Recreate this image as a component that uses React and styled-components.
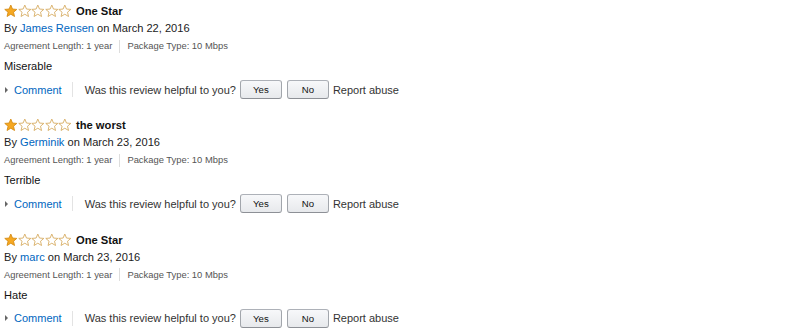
import React from 'react';
import styled, { createGlobalStyle } from 'styled-components';

const GlobalStyle = createGlobalStyle`
  body {
    margin: 0;
    background: #fff;
    font-family: "Liberation Sans", Arial, sans-serif;
    color: #111;
  }
`;

const reviews = [
  { title: 'One Star', author: 'James Rensen', date: 'March 22, 2016', body: 'Miserable' },
  { title: 'the worst', author: 'Germinik', date: 'March 23, 2016', body: 'Terrible' },
  { title: 'One Star', author: 'marc', date: 'March 23, 2016', body: 'Hate' },
];

const List = styled.div`
  padding: 3px 0 0 4px;
`;

const Review = styled.div`
  height: 114.3px;
`;

const TitleRow = styled.div`
  display: flex;
  align-items: center;
  height: 16px;
`;

const Stars = styled.div`
  display: flex;
  margin-right: 4px;
`;

const Title = styled.span`
  font-size: 11.2px;
  font-weight: bold;
  color: #111;
`;

const ByLine = styled.div`
  font-size: 11.1px;
  line-height: 18px;
  color: #222;
`;

const Link = styled.a`
  color: #0066c0;
  text-decoration: none;
`;

const Meta = styled.div`
  display: flex;
  align-items: center;
  font-size: 9.4px;
  color: #555;
  line-height: 16px;
  margin-top: 1px;
`;

const Divider = styled.span`
  width: 1px;
  height: 13px;
  background: #ddd;
  margin: 0 7px;
`;

const Body = styled.div`
  font-size: 11.1px;
  line-height: 18px;
  margin-top: 3px;
  color: #111;
`;

const Actions = styled.div`
  display: flex;
  align-items: center;
  font-size: 11px;
  margin-top: 4px;
  height: 21px;
`;

const Caret = styled.span`
  width: 0;
  height: 0;
  border-top: 3px solid transparent;
  border-bottom: 3px solid transparent;
  border-left: 3.5px solid #666;
  margin: 0 6px 0 1px;
`;

const ActionSep = styled.span`
  width: 1px;
  height: 15px;
  background: #e3e3e3;
  margin: 0 12px 0 10px;
`;

const Helpful = styled.span`
  color: #333;
  margin-right: 4px;
`;

const Button = styled.button`
  width: 42px;
  height: 19px;
  box-sizing: border-box;
  border: 1px solid #adb1b8;
  border-color: #adb1b8 #a2a6ac #8d9096;
  border-radius: 3px;
  background: linear-gradient(to bottom, #f7f8fa, #e7e9ec);
  font-family: "Liberation Sans", Arial, sans-serif;
  font-size: 9.6px;
  color: #111;
  padding: 0;
  margin-right: ${p => (p.$last ? '4px' : '5px')};
`;

const Report = styled.span`
  color: #333;
`;

const Star = ({ filled }) => (
  <svg width="13.6" height="14" viewBox="0 0 14 14">
    <path
      d="M7 0.9 L8.75 5.0 L13.2 5.35 L9.8 8.25 L10.85 12.65 L7 10.3 L3.15 12.65 L4.2 8.25 L0.8 5.35 L5.25 5.0 Z"
      fill={filled ? '#f6a821' : '#fff'}
      stroke={filled ? '#d48b13' : '#d6aa5e'}
      strokeWidth="0.9"
      strokeLinejoin="round"
    />
  </svg>
);

export default function App() {
  return (
    <>
      <GlobalStyle />
      <List>
        {reviews.map((r, i) => (
          <Review key={i}>
            <TitleRow>
              <Stars>
                {[0, 1, 2, 3, 4].map(n => (
                  <Star key={n} filled={n === 0} />
                ))}
              </Stars>
              <Title>{r.title}</Title>
            </TitleRow>
            <ByLine>
              By <Link href="#">{r.author}</Link> on {r.date}
            </ByLine>
            <Meta>
              Agreement Length: 1 year
              <Divider />
              Package Type: 10 Mbps
            </Meta>
            <Body>{r.body}</Body>
            <Actions>
              <Caret />
              <Link href="#">Comment</Link>
              <ActionSep />
              <Helpful>Was this review helpful to you?</Helpful>
              <Button>Yes</Button>
              <Button $last>No</Button>
              <Report>Report abuse</Report>
            </Actions>
          </Review>
        ))}
      </List>
    </>
  );
}
